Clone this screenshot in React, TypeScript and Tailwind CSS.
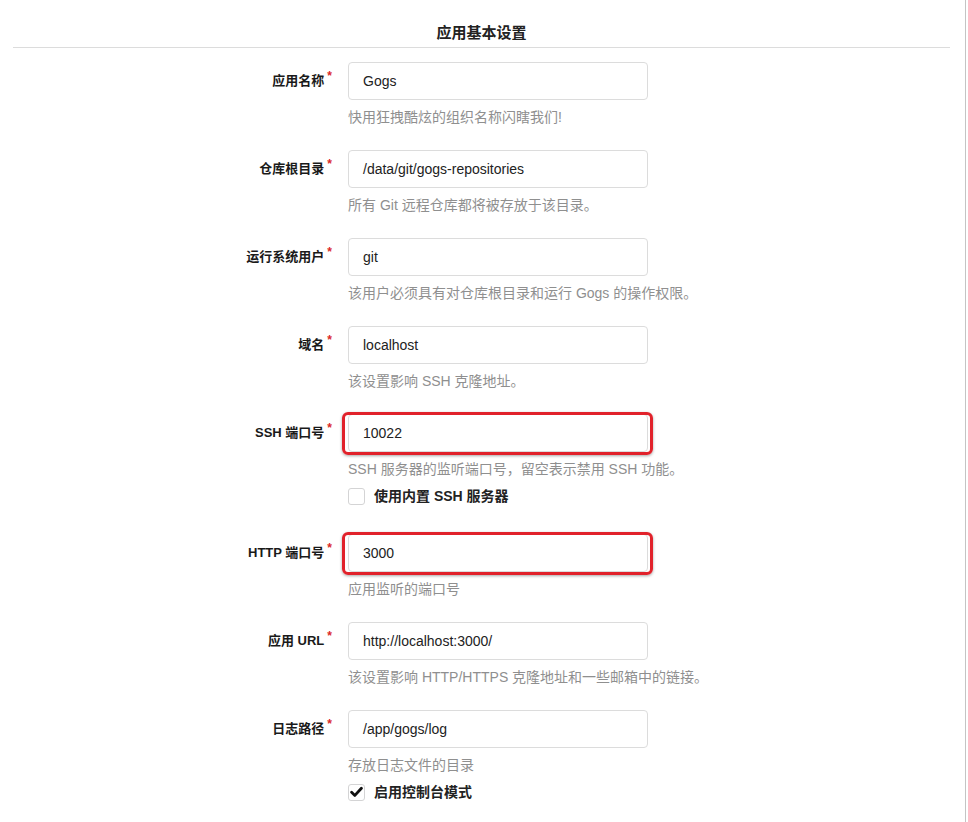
import React from "react";

const font = '"Helvetica Neue", "Liberation Sans", Arial, "Noto Sans CJK SC", sans-serif';

type Row = {
  label: string;
  value: string;
  help: string;
  highlight?: boolean;
  checkbox?: { label: string; checked: boolean };
};

const rows: Row[] = [
  { label: "应用名称", value: "Gogs", help: "快用狂拽酷炫的组织名称闪瞎我们!" },
  { label: "仓库根目录", value: "/data/git/gogs-repositories", help: "所有 Git 远程仓库都将被存放于该目录。" },
  { label: "运行系统用户", value: "git", help: "该用户必须具有对仓库根目录和运行 Gogs 的操作权限。" },
  { label: "域名", value: "localhost", help: "该设置影响 SSH 克隆地址。" },
  {
    label: "SSH 端口号",
    value: "10022",
    help: "SSH 服务器的监听端口号，留空表示禁用 SSH 功能。",
    highlight: true,
    checkbox: { label: "使用内置 SSH 服务器", checked: false },
  },
  { label: "HTTP 端口号", value: "3000", help: "应用监听的端口号", highlight: true },
  { label: "应用 URL", value: "http://localhost:3000/", help: "该设置影响 HTTP/HTTPS 克隆地址和一些邮箱中的链接。" },
  {
    label: "日志路径",
    value: "/app/gogs/log",
    help: "存放日志文件的目录",
    checkbox: { label: "启用控制台模式", checked: true },
  },
];

function Checkbox({ checked }: { checked: boolean }) {
  return (
    <span className="w-[17px] h-[17px] rounded-[3px] border border-[#d4d4d5] bg-white flex items-center justify-center shrink-0">
      {checked && (
        <svg width="13" height="12" viewBox="0 0 13 12">
          <path d="M1.6 6.2 L4.9 9.4 L11.4 2.2" fill="none" stroke="#111" strokeWidth="2.8" strokeLinecap="round" strokeLinejoin="round" />
        </svg>
      )}
    </span>
  );
}

function FormRow({ row }: { row: Row }) {
  return (
    <div className={`flex ${row.checkbox && row.highlight ? "mb-[28px]" : "mb-[24px]"}`}>
      <div className="w-[321px] h-[38px] flex items-center justify-end pr-[2px]">
        <span className="text-[13px] font-bold text-[#1a1a1a]">{row.label}</span>
        <span className="text-[#db2828] text-[12px] font-bold self-start mt-[8px] ml-[3px] leading-none">*</span>
      </div>
      <div className="ml-[14px] w-[300px]">
        <div className="relative">
          <div className="h-[38px] w-[300px] border border-[#dcdcdc] rounded-[4px] bg-white flex items-center px-[14px] text-[14px] text-[#222]">
            {row.value}
          </div>
          {row.highlight && (
            <div className="absolute left-[-6px] right-[-5px] top-[-2px] bottom-[-3px] border-[3px] border-[#e1222b] rounded-[6px] shadow-[0_1px_3px_rgba(0,0,0,0.35)]" />
          )}
        </div>
        <div className="mt-[8px] leading-[18px] text-[14px] text-[#8f8f8f] whitespace-nowrap">{row.help}</div>
        {row.checkbox && (
          <div className="mt-[8px] h-[20px] flex items-center gap-[9px]">
            <Checkbox checked={row.checkbox.checked} />
            <span className="text-[14px] font-bold text-[#222]">{row.checkbox.label}</span>
          </div>
        )}
      </div>
    </div>
  );
}

export default function App() {
  return (
    <div className="w-[968px] h-[822px] bg-white flex overflow-hidden" style={{ fontFamily: font }}>
      <div className="w-[965px] px-[13px] pr-[15px]">
        <div className="pt-[25px] pb-[6px] border-b border-[#dcdcdc] text-center text-[15px] font-bold text-[#222] leading-[16px]">
          应用基本设置
        </div>
        <div className="pt-[14px]">
          {rows.map((r) => (
            <FormRow key={r.label} row={r} />
          ))}
        </div>
      </div>
      <div className="w-[1px] h-full bg-[#c4c4c4]" />
    </div>
  );
}
